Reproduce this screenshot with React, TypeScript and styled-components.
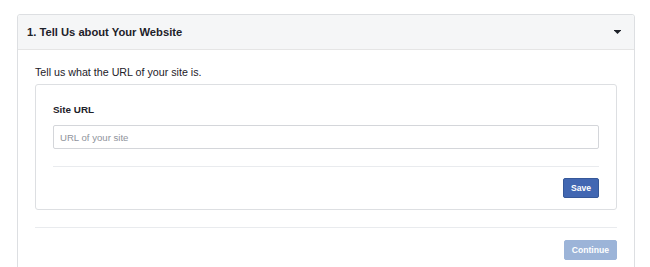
import React from "react";
import styled, { createGlobalStyle } from "styled-components";

const GlobalStyle = createGlobalStyle`
  body {
    margin: 0;
    background: #ffffff;
    font-family: "Liberation Sans", Arial, Helvetica, sans-serif;
    color: #1d2129;
  }
`;

const Page = styled.div`
  padding: 14px 15px 0 17px;
  height: 267px;
  box-sizing: border-box;
  overflow: hidden;
`;

const Card = styled.div`
  border: 1px solid #dddfe2;
  border-radius: 3px;
  background: #fff;
  height: 300px;
`;

const CardHeader = styled.div`
  display: flex;
  align-items: center;
  justify-content: space-between;
  height: 34px;
  padding: 0 13px 0 9px;
  background: #f5f6f7;
  border-bottom: 1px solid #e5e5e5;
  border-radius: 3px 3px 0 0;
`;

const HeaderTitle = styled.h2`
  margin: 0;
  font-size: 11.2px;
  font-weight: bold;
  color: #1d2129;
`;

const Caret = styled.svg`
  display: block;
`;

const CardBody = styled.div`
  padding: 14px 17px 0 17px;
`;

const Intro = styled.p`
  margin: 0 0 4px 0;
  font-size: 10.7px;
  line-height: 16px;
  color: #1d2129;
`;

const Panel = styled.div`
  border: 1px solid #dddfe2;
  border-radius: 3px;
  padding: 17px 17px 11px 17px;
`;

const FieldLabel = styled.label`
  display: block;
  font-size: 9.9px;
  font-weight: bold;
  line-height: 16px;
  margin: 0 0 7px 0;
`;

const TextInput = styled.input`
  display: block;
  width: 100%;
  box-sizing: border-box;
  height: 24px;
  padding: 0 6px;
  border: 1px solid #d4d6da;
  border-radius: 2px;
  font-family: "Liberation Sans", Arial, sans-serif;
  font-size: 9.6px;
  color: #1d2129;
  outline: none;

  &::placeholder {
    color: #90949c;
  }
`;

const Divider = styled.hr<{ $above: number; $below: number }>`
  border: 0;
  border-top: 1px solid #e9ebee;
  margin: ${(p) => p.$above}px 0 ${(p) => p.$below}px 0;
`;

const ButtonRow = styled.div`
  display: flex;
  justify-content: flex-end;
`;

const Button = styled.button<{ $disabled?: boolean }>`
  height: 20px;
  padding: 0 7px;
  border: 1px solid ${(p) => (p.$disabled ? "#9cb4d8" : "#365899")};
  border-radius: 2px;
  background: ${(p) => (p.$disabled ? "#9cb4d8" : "#4267b2")};
  color: #fff;
  font-family: "Liberation Sans", Arial, sans-serif;
  font-size: 8.6px;
  font-weight: bold;
  line-height: 18px;
  cursor: pointer;
`;

export default function App() {
  return (
    <>
      <GlobalStyle />
      <Page>
        <Card>
          <CardHeader>
            <HeaderTitle>1. Tell Us about Your Website</HeaderTitle>
            <Caret width="7" height="4" viewBox="0 0 7 4">
              <rect x="0" y="0" width="7" height="1" fill="#1d2129" />
              <path d="M0.5 1 L6.5 1 L3.5 4 Z" fill="#1d2129" />
            </Caret>
          </CardHeader>
          <CardBody>
            <Intro>Tell us what the URL of your site is.</Intro>
            <Panel>
              <FieldLabel>Site URL</FieldLabel>
              <TextInput placeholder="URL of your site" />
              <Divider $above={17} $below={11} />
              <ButtonRow>
                <Button>Save</Button>
              </ButtonRow>
            </Panel>
            <Divider $above={17} $below={12} />
            <ButtonRow>
              <Button $disabled>Continue</Button>
            </ButtonRow>
          </CardBody>
        </Card>
      </Page>
    </>
  );
}
